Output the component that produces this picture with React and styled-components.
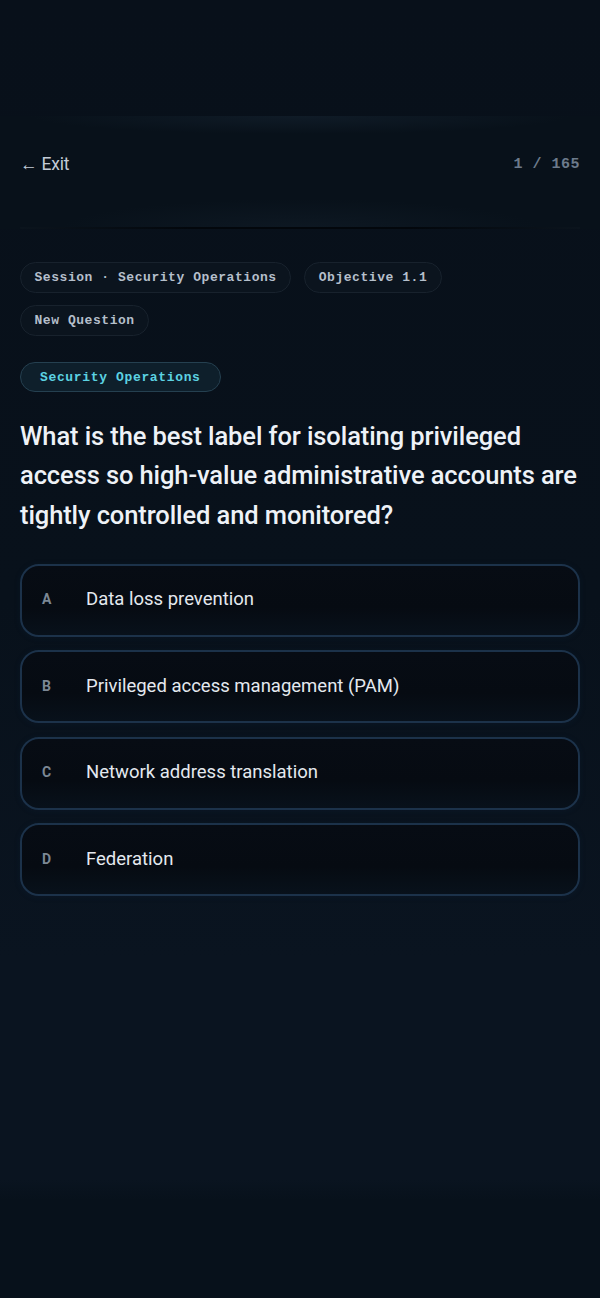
import React from "react";
import styled, { createGlobalStyle } from "styled-components";

const Global = createGlobalStyle`
  html, body { margin: 0; padding: 0; background: #08101a; }
  body { font-family: Roboto, "Noto Sans", sans-serif; -webkit-font-smoothing: antialiased; }
  * { box-sizing: border-box; }
`;

const Page = styled.div`
  min-height: 1298px;
  background:
    linear-gradient(180deg, #08101a 0px, #08111b 600px, #0a1420 960px, #0a1420 1180px, #07111b 1200px, #07111b 1298px);
  padding-top: 116px;
  color: #e6ebf1;
`;

const Header = styled.header`
  height: 113px;
  padding: 0 20px;
  display: flex;
  flex-direction: column;
  background:
    radial-gradient(ellipse 45% 18px at 50% 0, rgba(22, 36, 50, 0.55), transparent),
    radial-gradient(ellipse 40% 30px at 50% 100%, rgba(18, 30, 42, 0.55), transparent),
    #08111a;
`;

const HeaderRow = styled.div`
  flex: 1;
  display: flex;
  align-items: center;
  justify-content: space-between;
  padding-bottom: 14px;
`;

const ExitLink = styled.a`
  font-family: Roboto, sans-serif;
  font-size: 17.5px;
  color: #c3ccd7;
  letter-spacing: -0.2px;
  text-decoration: none;
`;

const Counter = styled.span`
  font-family: "Liberation Mono", "DejaVu Sans Mono", monospace;
  font-weight: 700;
  font-size: 15px;
  letter-spacing: 0.5px;
  color: #6c7a8b;
`;

const Divider = styled.div`
  height: 2px;
  background: linear-gradient(90deg, #0b141d, #03070c 30%, #03070c 70%, #0b141d);
`;

const Body = styled.main`
  padding: 33px 20px 0;
  display: flex;
  flex-direction: column;
`;

const ChipWrap = styled.div`
  display: flex;
  flex-wrap: wrap;
  gap: 12px 13px;
`;

const Chip = styled.span`
  display: inline-flex;
  align-items: center;
  height: 31px;
  padding: 0 13.5px;
  border-radius: 16px;
  border: 1px solid #18222d;
  background: #0b141e;
  font-family: "Liberation Mono", "DejaVu Sans Mono", monospace;
  font-weight: 700;
  font-size: 13px;
  letter-spacing: 0.55px;
  color: #b5bfcb;
`;

const Domain = styled(Chip)`
  margin-top: 26px;
  align-self: flex-start;
  height: 30px;
  padding: 0 19px;
  background: #0e1f2b;
  border-color: #254050;
  color: #5cd2e2;
  letter-spacing: 0.65px;
`;

const Question = styled.h1`
  margin: 25px 0 29px;
  font-family: Roboto, sans-serif;
  font-weight: 500;
  font-size: 25.5px;
  line-height: 39.3px;
  letter-spacing: -0.1px;
  color: #eef2f7;
`;

const Options = styled.div`
  display: flex;
  flex-direction: column;
  gap: 13.5px;
`;

const Option = styled.button`
  display: flex;
  align-items: center;
  height: 73px;
  padding: 0 0 2px 20px;
  border-radius: 19px;
  border: 2px solid #1c324a;
  background: linear-gradient(180deg, #070c14, #060b12 60%, #08111b);
  box-shadow: 0 1px 6px rgba(20, 50, 80, 0.15);
  cursor: pointer;
  text-align: left;
`;

const Letter = styled.span`
  width: 44px;
  font-family: Roboto, sans-serif;
  font-weight: 700;
  font-size: 14px;
  color: #7b8794;
`;

const OptionText = styled.span`
  font-family: Roboto, sans-serif;
  font-size: 18.5px;
  color: #e4e9ef;
`;

const options = [
  ["A", "Data loss prevention"],
  ["B", "Privileged access management (PAM)"],
  ["C", "Network address translation"],
  ["D", "Federation"],
];

export default function App() {
  return (
    <Page>
      <Global />
      <Header>
        <HeaderRow>
          <ExitLink href="#">← Exit</ExitLink>
          <Counter>1 / 165</Counter>
        </HeaderRow>
        <Divider />
      </Header>
      <Body>
        <ChipWrap>
          <Chip>Session · Security Operations</Chip>
          <Chip>Objective 1.1</Chip>
          <Chip>New Question</Chip>
        </ChipWrap>
        <Domain>Security Operations</Domain>
        <Question>
          What is the best label for isolating privileged access so high-value
          administrative accounts are tightly controlled and monitored?
        </Question>
        <Options>
          {options.map(([l, t]) => (
            <Option key={l}>
              <Letter>{l}</Letter>
              <OptionText>{t}</OptionText>
            </Option>
          ))}
        </Options>
      </Body>
    </Page>
  );
}
